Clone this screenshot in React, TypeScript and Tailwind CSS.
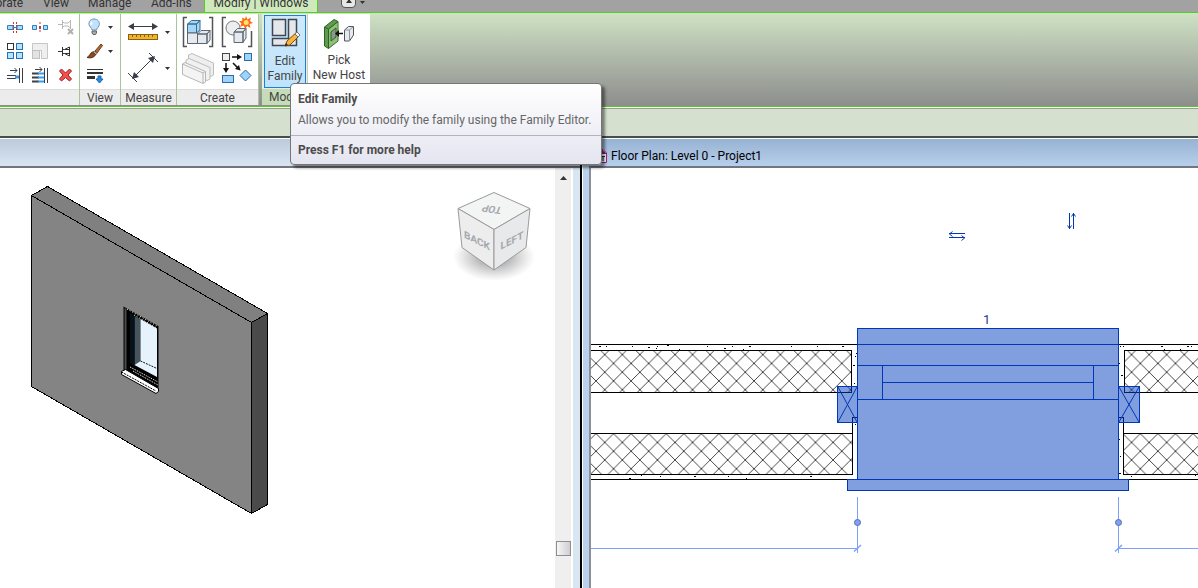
import type { ReactNode } from "react";

const INK = "#3a3f4a";
const BLUE = "#0037b8";
const DIM = "#7da0ff";

function Caret() {
  return (
    <svg width="5" height="3" viewBox="0 0 5 3">
      <path d="M0 0H5L2.5 3Z" fill="#333" />
    </svg>
  );
}

function Icon({ size = 18, children }: { size?: number; children: ReactNode }) {
  return (
    <svg width={size} height={size} viewBox={`0 0 ${size} ${size}`} fill="none">
      {children}
    </svg>
  );
}

const editTools: { name: string; icon: ReactNode }[] = [
  {
    name: "Split Element",
    icon: (
      <Icon>
        <path d="M1.500 7.500H7V11.500H1.500ZM11 7.500H16.500V11.500H11Z" fill="#a8dcf8" stroke="#2f7fb8" />
        <path d="M7 9.500H11" stroke="#2f7fb8" />
        <path d="M7.500 4V15M10.500 4V15" stroke="#c33" strokeDasharray="2 1" />
      </Icon>
    ),
  },
  {
    name: "Split with Gap",
    icon: (
      <Icon>
        <path d="M1.500 7.500H5.500V11.500H1.500ZM12.500 7.500H16.500V11.500H12.500Z" fill="#a8dcf8" stroke="#2f7fb8" />
        <path d="M9 4V7M9 12V15" stroke="#c33" strokeDasharray="2 1" />
        <rect x="8" y="8" width="2" height="3" fill="#c33" />
      </Icon>
    ),
  },
  {
    name: "Unpin",
    icon: (
      <Icon>
        <path d="M1 6.500H5M5.500 2V11M5.500 4L7.500 5H11L13.500 3M5.500 9L7.500 8H11L13.500 10M13.500 2V11" stroke="#b8b8b8" />
        <path d="M11 11L16 16M16 11L11 16" stroke="#b0b0b0" strokeWidth="2" />
      </Icon>
    ),
  },
  {
    name: "Array",
    icon: (
      <Icon>
        <rect x="1.500" y="1.500" width="6" height="6" fill="#fff" stroke="#333" />
        <rect x="10.500" y="1.500" width="6" height="6" fill="#b6e2fb" stroke="#2272b4" />
        <rect x="1.500" y="10.500" width="6" height="6" fill="#b6e2fb" stroke="#2272b4" />
        <rect x="10.500" y="10.500" width="6" height="6" fill="#b6e2fb" stroke="#2272b4" />
      </Icon>
    ),
  },
  {
    name: "Scale",
    icon: (
      <Icon>
        <path d="M1.500 1.500H16.500V16.500H10.500V8.500H1.500Z" fill="#efefef" stroke="#c6c6c6" />
        <rect x="1.500" y="8.500" width="7" height="8" fill="#e2e2e2" stroke="#c0c0c0" />
      </Icon>
    ),
  },
  {
    name: "Pin",
    icon: (
      <Icon>
        <path
          d="M1 9.500H5M5.500 5V14M5.500 7.500H7.500L12.500 5V14L7.500 11.500H5.500M7.500 7.500H12.500M7.500 11.500H12.500"
          stroke="#333"
        />
      </Icon>
    ),
  },
  {
    name: "Trim Single",
    icon: (
      <Icon>
        <path d="M1 9.500H10M1 12.500H10" stroke={INK} />
        <path d="M9 11H14" stroke="#3c9be8" strokeWidth="3" />
        <path d="M13.500 2V17M16.500 2V17" stroke={INK} />
        <path d="M4 4.500H11M8.500 2L11 4.500L8.500 7" stroke={INK} />
      </Icon>
    ),
  },
  {
    name: "Trim Multiple",
    icon: (
      <Icon>
        <path d="M1 7.500H8M1 11.500H8M1 15.500H8" stroke={INK} strokeWidth="2" />
        <path d="M7 7.500H13M7 11.500H13M7 15.500H13" stroke="#3c9be8" strokeWidth="2" />
        <path d="M13.500 2V17M16.500 2V17" stroke={INK} />
        <path d="M4 3.500H11M8.500 1L11 3.500L8.500 6" stroke={INK} />
      </Icon>
    ),
  },
  {
    name: "Delete",
    icon: (
      <Icon>
        <path
          d="M2.500 5L4.500 3L8.500 7L12.500 3L14.500 5L11 9L14.500 13L12.500 15L8.500 11.500L4.500 15L2.500 13L6 9Z"
          fill="#f0524f"
          stroke="#a81d1d"
        />
      </Icon>
    ),
  },
];

const viewTools: { name: string; menu: boolean; icon: ReactNode }[] = [
  {
    name: "Hide in View",
    menu: true,
    icon: (
      <Icon>
        <path
          d="M8 1C4.500 1 2.500 3.500 3 6.500C3.500 9 5.500 9.500 6 12H10.500C11 9.500 13 9 13.300 6.500C13.700 3.500 11.500 1 8 1Z"
          fill="#c3e2fa"
          stroke="#5f93c2"
        />
        <path d="M6 4C5 5 5 6 5.500 7" stroke="#fff" strokeWidth="2" />
        <path d="M6 13H10.500V15L9.500 16.500H7L6 15Z" fill="#aaa" stroke="#666" />
      </Icon>
    ),
  },
  {
    name: "Override Graphics",
    menu: true,
    icon: (
      <Icon>
        <path d="M9 9L15 2L16.500 3.500L11 11Z" fill="#b86a35" stroke="#6b3a1c" />
        <path d="M8 9L11 11.500L9.500 13L6.500 10.500Z" fill="#bbb" stroke="#777" />
        <path d="M6.500 10C4 11 4 14 1 15.500C5 16.500 8.500 15.500 9.500 12.500Z" fill="#8a4b22" stroke="#5b2f12" />
      </Icon>
    ),
  },
  {
    name: "Linework",
    menu: false,
    icon: (
      <Icon>
        <path d="M1 3.500H17" stroke="#333" />
        <path d="M1 7H17" stroke="#333" strokeWidth="2" />
        <path d="M1 11.500H9" stroke="#333" strokeWidth="3" />
        <path d="M12 10H15V13H17L13.500 17L10 13H12Z" fill="#2b8be0" stroke="#1666b0" />
      </Icon>
    ),
  },
];

const measureTools: { name: string; icon: ReactNode }[] = [
  {
    name: "Measure Between References",
    icon: (
      <Icon size={30}>
        <path d="M3 9.500H27" stroke={INK} />
        <path d="M0 9.500L6 6V13ZM30 9.500L24 6V13Z" fill={INK} />
        <rect x="0.500" y="17.500" width="29" height="5" fill="#eeb52e" stroke="#8e5f10" />
        <path d="M4.500 18V20M8.500 18V20M12.500 18V20M16.500 18V20M20.500 18V20M24.500 18V20" stroke="#8e5f10" />
      </Icon>
    ),
  },
  {
    name: "Aligned Dimension",
    icon: (
      <Icon size={30}>
        <path d="M6 24L25 5" stroke={INK} />
        <path d="M4 26L6 19L11 24ZM27 3L25 10L20 5Z" fill={INK} />
        <path d="M0 20L9 29M21 0L30 9" stroke={INK} />
      </Icon>
    ),
  },
];

const createTools: { name: string; icon: ReactNode }[] = [
  {
    name: "Create Assembly",
    icon: (
      <Icon size={32}>
        <path d="M5 1.500H1.500V30.500H5M27 1.500H30.500V30.500H27" stroke="#555" strokeWidth="1.500" />
        <path d="M5.500 8L9.500 4.500H18L14.500 8ZM5.500 8H14.500V17H5.500ZM14.500 8L18 4.500V14L14.500 17Z" fill="#a6d5f5" stroke="#346c98" />
        <path d="M5.500 17H15.500V27.500H5.500ZM15.500 18L19 14.500H28L25 18ZM15.500 18H25V27.500H15.500ZM25 18L28 14.500V24L25 27.500Z" fill="#e6e9ee" stroke="#5c6672" />
      </Icon>
    ),
  },
  {
    name: "Create Group",
    icon: (
      <Icon size={32}>
        <path d="M5 1.500H1.500V30.500H5M27 30.500H30.500V15" stroke="#555" strokeWidth="1.500" />
        <circle cx="12" cy="12" r="7" fill="#eceef0" stroke="#777" />
        <path d="M13 16L16.500 12.500H25L22 16ZM13 16H22V26.500H13ZM22 16L25 12.500V22L22 26.500Z" fill="#e6e9ee" stroke="#5c6672" />
        <path
          d="M25 0L26.500 3.500L30 1.500L29 5L32 7L28.500 8L29.500 12L26 10L24.500 13L22.500 9.500L19 11L20.500 7.500L18 5.500L21.500 4.500L21 1.500L24 3Z"
          fill="#ff6a13"
        />
        <circle cx="25.200" cy="6.500" r="2.500" fill="#ffe46a" />
      </Icon>
    ),
  },
  {
    name: "Create Parts",
    icon: (
      <Icon size={32}>
        <path d="M6.500 3L10 1.500L31.500 11V23L29 24.500L6.500 14Z" fill="#eee" stroke="#bdbdbd" />
        <path d="M4 8L7 6.500L28 15.500V27L25 28.500L4 19Z" fill="#f1f1f1" stroke="#bdbdbd" />
        <path d="M0.500 12L3 10.500L23.500 19.500V30L21 31.500L0.500 22.500Z" fill="#f4f4f4" stroke="#b6b6b6" />
        <path d="M0.500 12L21 21V31.500M21 21L23.500 19.500" stroke="#b6b6b6" />
      </Icon>
    ),
  },
  {
    name: "Create Similar",
    icon: (
      <Icon size={32}>
        <rect x="1.500" y="1.500" width="7" height="7" fill="#eee" stroke="#444" />
        <rect x="23.500" y="1.500" width="7" height="7" fill="#9ed3fa" stroke="#2a6ba8" />
        <rect x="1.500" y="23.500" width="11" height="7" fill="#9ed3fa" stroke="#2a6ba8" />
        <path d="M24.500 18L30 23.500L24.500 29L19 23.500Z" fill="#9ed3fa" stroke="#2a6ba8" />
        <path d="M11 5H18M5 11V17M12 11L17 16" stroke="#111" strokeWidth="1.500" />
        <path d="M21 5L16 2V8ZM5 21L2 16H8ZM19.500 18.500L14 17L18 13Z" fill="#111" />
      </Icon>
    ),
  },
];

function Panel({ title, className, children }: { title?: string; className: string; children: ReactNode }) {
  return (
    <section className={`flex flex-col border-r border-[#a9c39b] bg-white ${className}`}>
      <div className="h-[75px]">{children}</div>
      <h2 className="h-4 border-t border-[#dcdcdc] bg-[#ececec] text-center text-[12px] leading-4 text-[#444]">
        {title}
      </h2>
    </section>
  );
}

function Tabs() {
  return (
    <nav className="flex h-3 items-end overflow-hidden bg-[#a2a2a2] text-[12px] leading-[18px] whitespace-nowrap text-[#333]">
      <a href="#collaborate" className="flex w-[23px] justify-end">Collaborate</a>
      <a href="#view" className="ml-5 w-[25px]">View</a>
      <a href="#manage" className="ml-5 w-[43px]">Manage</a>
      <a href="#addins" className="ml-5 w-[42px]">Add-Ins</a>
      <a
        href="#modify"
        className="ml-[11px] w-[114px] border-x border-[#55cc22] bg-[#cfe9bd] text-center"
      >
        Modify | Windows
      </a>
      <button
        aria-label="Minimize ribbon"
        className="mb-1 ml-[23px] flex h-4 w-[15px] items-end justify-center rounded border border-[#555] bg-[#e8e8e8] pb-1"
      >
        <svg width="6" height="4" viewBox="0 0 6 4">
          <path d="M0 4L3 0L6 4Z" fill="#333" />
        </svg>
      </button>
      <button aria-label="Ribbon options" className="mb-2 ml-1">
        <Caret />
      </button>
    </nav>
  );
}

function Ribbon() {
  return (
    <div className="flex h-[95px] border-y border-[#55cc22] bg-linear-to-b from-[#cfe2c4] to-[#8d8e8c] py-px text-[12px] text-[#444]">
      <Panel className="w-20">
        <div className="grid grid-cols-3 pt-px pl-0.5">
          {editTools.map((t) => (
            <button key={t.name} aria-label={t.name} className="grid h-6 place-items-center">
              {t.icon}
            </button>
          ))}
        </div>
      </Panel>
      <Panel title="View" className="w-[41px]">
        <div className="pt-px pl-1.5">
          {viewTools.map((t) => (
            <button key={t.name} aria-label={t.name} className="flex h-6 items-center gap-1">
              {t.icon}
              {t.menu && <Caret />}
            </button>
          ))}
        </div>
      </Panel>
      <Panel title="Measure" className="w-14">
        <div className="pl-[7px]">
          {measureTools.map((t) => (
            <button key={t.name} aria-label={t.name} className="flex h-9 items-center gap-[7px]">
              {t.icon}
              <Caret />
            </button>
          ))}
        </div>
      </Panel>
      <Panel title="Create" className="w-[82px]">
        <div className="grid grid-cols-2 place-items-center gap-y-1 px-0.5 pt-0.5">
          {createTools.map((t) => (
            <button key={t.name} aria-label={t.name} className="h-8">
              {t.icon}
            </button>
          ))}
        </div>
      </Panel>
      <section className="ml-[3px] flex w-[108px] flex-col">
        <div className="flex h-[75px] bg-white">
          <div className="w-[46px] border-r border-[#ccc] bg-[#e3f0dc] pt-px pl-0.5">
            <button className="flex h-[73px] w-[42px] flex-col items-center border border-[#1d7fd8] bg-linear-to-b from-[#cfe9fb] to-[#bfe3fb] text-[12px] leading-[15px]">
              <svg width="32" height="32" viewBox="0 0 32 32" fill="none" className="mt-0.5 mb-1 shrink-0">
                <rect x="3.500" y="1.500" width="13" height="16" fill="#e4e8ec" stroke="#3f4650" strokeWidth="1.500" />
                <path d="M19.500 1.500H27.500V27.500H3.500V20.500H19.500Z" fill="#e4e8ec" stroke="#3f4650" strokeWidth="1.500" />
                <path d="M16 28L18 23L28 14L31 17L21 27Z" fill="#f7b53c" stroke="#7a4b12" />
                <path d="M28 14L31 17L29 19L26 16Z" fill="#f3f3f3" stroke="#777" />
                <path d="M16 28L17 25L19 27Z" fill="#222" />
              </svg>
              Edit
              <br />
              Family
            </button>
          </div>
          <button className="flex flex-1 flex-col items-center pt-px text-[12px] leading-[15px]">
            <svg width="34" height="32" viewBox="0 0 34 32" fill="none" className="mt-0.5 mb-1 shrink-0">
              <path d="M2.500 10L12 2.500L16 4.500V24L6.500 31.500L2.500 29Z" fill="#5f9b4c" stroke="#2b6323" />
              <path d="M7 12.500L15.500 5.500V24L7 30.500Z" fill="#8fbf78" />
              <path d="M2.500 10L6.500 12V31.500M6.500 12L16 4.500" stroke="#2b6323" />
              <path d="M9 15L14 11V20L9 24Z" fill="#8b9a90" stroke="#2b6323" />
              <path d="M15 16.500H21" stroke="#111" strokeWidth="1.500" />
              <path d="M13 16.500L17 13V20Z" fill="#111" />
              <path d="M22.500 13L26.500 9.500H31.500V18L27.500 24H22.500Z" fill="#e6e9ee" stroke="#4d5560" />
              <path d="M22.500 13H27.500V24M27.500 13L31.500 9.500" stroke="#8b929b" />
            </svg>
            Pick
            <br />
            New Host
          </button>
        </div>
        <h2 className="h-4 bg-[#c6dcb9] pl-[7px] leading-4">Modify</h2>
      </section>
    </div>
  );
}

function Tooltip() {
  return (
    <div
      role="tooltip"
      className="absolute top-[83px] left-[290px] z-10 h-[82px] w-[312px] rounded-sm border border-[#767676] bg-linear-to-b from-white to-[#e4e5f0] text-[12px] leading-4 whitespace-nowrap text-[#4c4c4c] shadow-[3px_3px_3px_rgba(0,0,0,0.45)]"
    >
      <div className="h-[52px] border-b border-[#b4b4bc] px-[7px] pt-[7px]">
        <p className="font-bold">Edit Family</p>
        <p className="pt-[5px] text-[#666]">Allows you to modify the family using the Family Editor.</p>
      </div>
      <p className="px-[7px] pt-[6px] font-bold">Press F1 for more help</p>
    </div>
  );
}

function WallView() {
  return (
    <svg width="555" height="420" viewBox="0 168 555 420" className="shrink-0">
      <defs>
        <radialGradient id="cubeShadow">
          <stop offset="0.3" stopColor="#777" stopOpacity="0.6" />
          <stop offset="1" stopColor="#999" stopOpacity="0" />
        </radialGradient>
      </defs>

      <g stroke="#000" shapeRendering="crispEdges">
        <path d="M31.500 195.500L47.500 186.500L267.500 313.500L251.500 322.500Z" fill="#808080" />
        <path d="M31.500 195.500L251.500 322.500V513.500L31.500 386.500Z" fill="#848484" />
        <path d="M251.500 322.500L267.500 313.500V504.500L251.500 513.500Z" fill="#4a4a4a" />
      </g>

      <path d="M123.500 306.500L158.500 326V390L123.500 370Z" fill="#000" />
      <path d="M124.500 308V369L126.500 370V309Z" fill="#4a4a4a" />
      <path d="M134.500 316L140.500 319.500V361L134.500 365Z" fill="#47545c" />
      <path d="M130 313L134.500 316V366L130 363Z" fill="#07131b" />
      <path d="M140.500 319L157 328.500V377L134.500 365L140.500 361Z" fill="#e6f3fc" />
      <path d="M140.500 361L157 368.500" stroke="#111" strokeDasharray="2 1" />
      <path d="M127 309L158 326.500M134 315L157 328" stroke="#fff" strokeDasharray="1 2" />
      <path d="M130 367L158 382M133 371L158 385" stroke="#fff" strokeDasharray="1 1" />
      <path d="M121.500 371.500L125.500 369.500L158.500 388.500V391.500L156 393.500L121.500 374.500Z" fill="#fff" stroke="#000" />
      <path d="M121.500 372L156 391" stroke="#000" strokeDasharray="2 1" />

      <ellipse cx="494" cy="257" rx="41" ry="24" fill="url(#cubeShadow)" />
      <g stroke="#9a9a9a">
        <path d="M458 208.500L494 192.500L530 208.500L494 229.500Z" fill="#f3f4f4" />
        <path d="M458 208.500L494 229.500V270L462 247.500Z" fill="#ededee" />
        <path d="M530 208.500L494 229.500V270L526 247.500Z" fill="#e8e9ea" />
      </g>
      <g
        fill="#a3a8ac"
        fontSize="10"
        fontWeight="bold"
        textAnchor="middle"
        className="font-['Liberation_Sans_Narrow','Roboto',sans-serif]"
      >
        <text transform="translate(493 206) rotate(188) skewX(-12)">TOP</text>
        <text transform="translate(477 244) skewY(27)">BACK</text>
        <text transform="translate(512 244) skewY(-27)">LEFT</text>
      </g>
    </svg>
  );
}

const specks = [
  [599, 346], [606, 346], [632, 346], [648, 347], [657, 346], [656, 348], [667, 345], [679, 349],
  [707, 346], [724, 348], [732, 346], [743, 349], [749, 346], [791, 346], [817, 346], [842, 346],
  [856, 353], [855, 356], [853, 365], [854, 383], [855, 424], [629, 478], [641, 475], [660, 476],
  [694, 476], [728, 476], [746, 478], [810, 476], [1120, 346], [1123, 346], [1161, 346], [1164, 349],
  [1180, 349], [1187, 346], [1191, 346], [1119, 363], [1121, 375], [1119, 439], [1120, 456],
  [1119, 473], [1131, 476], [1195, 475],
];

function PlanView() {
  return (
    <svg width="607" height="420" viewBox="591 168 607 420" className="shrink-0" fill="none">
      <defs>
        <pattern id="insulation" x="587.2" y="354.6" width="17.56" height="17.56" patternUnits="userSpaceOnUse">
          <path d="M0 0L17.560 17.560M17.560 0L0 17.560" stroke="#333" strokeWidth="0.900" />
        </pattern>
      </defs>

      <g stroke="#000" shapeRendering="crispEdges">
        <path d="M591 344.500H857M1119 344.500H1198M591 479.500H857M1119 479.500H1198" />
        <path d="M580 350.500H851.500V392.500H580ZM580 433.500H852.500V474.500H580Z" fill="url(#insulation)" />
        <path d="M1210 350.500H1124.500V392.500H1210ZM1210 433.500H1123.500V474.500H1210Z" fill="url(#insulation)" />
        <path d="M852.500 434V417.500H857M1123.500 434V417.500H1119" />
      </g>
      {specks.map(([x, y], i) => (
        <rect key={i} x={x} y={y} width={i % 3 === 0 ? 2 : 1} height="1" fill="#000" />
      ))}

      <g stroke={BLUE} fill="#0340c0" fillOpacity="0.5" shapeRendering="crispEdges">
        <rect x="857.5" y="328.5" width="261" height="151" />
        <rect x="847.5" y="479.5" width="281" height="11" />
        <rect x="837.5" y="386.5" width="20" height="36" />
        <rect x="1118.5" y="386.5" width="21" height="36" />
        <path d="M857 344.500H1119M857 365.500H1119M857 399.500H1119M882.500 365V399M1093.500 365V399M882 382.500H1094" />
      </g>
      <path d="M838 387L857 422M857 387L838 422M1119 387L1139 422M1139 387L1119 422" stroke={BLUE} />

      <text x="983" y="324" fontSize="13" fill="#1a3c94">1</text>

      <g stroke={BLUE}>
        <path d="M949 233.500H965M949.500 234L952.500 231.500M949.500 234L952.500 236.500" />
        <path d="M949 237.500H965M964.500 238L961.500 235.500M964.500 238L961.500 240.500" />
        <path d="M1069.500 213V229M1069.500 228.500L1067.500 225.500M1069.500 228.500L1071.500 225.500" />
        <path d="M1073.500 213V229M1073.500 213.500L1071.500 216.500M1073.500 213.500L1075.500 216.500" />
      </g>

      <g stroke={DIM}>
        <path d="M857.500 497V553M1118.500 497V553M591 548.500H857M1119 548.500H1198" />
        <path d="M854 551.500L861 545M1115 551.500L1122 545" strokeWidth="1.500" />
      </g>
      <g fill={DIM} stroke="#5a6f96">
        <circle cx="857.5" cy="522.5" r="3" />
        <circle cx="1118.5" cy="522.5" r="3" />
      </g>
    </svg>
  );
}

export default function App() {
  return (
    <div className="relative flex min-h-screen flex-col overflow-hidden bg-white font-['Roboto','Open_Sans',sans-serif]">
      <Tabs />
      <Ribbon />
      <div className="h-[31px] border-t border-b-2 border-t-white border-b-[#4a4d50] bg-[#d6e0cf] shadow-[inset_0_1px_0_#9a9f96]" />
      <Tooltip />

      <main className="flex flex-1 border-t border-white">
        <section className="flex w-[580px] shrink-0 flex-col">
          <div className="h-[29px] border-b-2 border-[#71757e] bg-linear-to-b from-[#bccadb] to-[#d9e5f2]" />
          <div className="flex flex-1">
            <div className="flex-1 overflow-hidden">
              <WallView />
            </div>
            <div className="flex w-4 flex-col items-center justify-between bg-[#efefef] pt-2 pb-8">
              <button aria-label="Scroll up">
                <svg width="7" height="4" viewBox="0 0 7 4" className="block">
                  <path d="M0 4L3.500 0L7 4Z" fill="#333" />
                </svg>
              </button>
              <button
                aria-label="Scroll position"
                className="size-[15px] border border-[#8e8e8e] bg-linear-to-r from-[#f6f6f6] to-[#cfcfd2]"
              />
            </div>
            <div className="w-[9px] border-l-2 border-white bg-[#d8e6f2]" />
          </div>
        </section>

        <section className="flex flex-1 border-l-2 border-black">
          <div className="w-[7px] border-l border-white bg-[#b9d1ec]" />
          <div className="flex flex-1 flex-col">
            <header className="flex h-[29px] items-center gap-1 border-b-2 border-[#71757e] bg-linear-to-b from-[#98b2d2] to-[#b6cfec] pt-1.5 pl-2 text-[12px] text-black">
              <svg width="10" height="14" viewBox="0 0 10 14">
                <path d="M0 0.500H6L9.500 4V13.500H0Z" fill="#fff" stroke="#a0207c" />
                <path d="M4 0L10 5H4Z" fill="#8a1c6c" />
                <path d="M4 7.500H8M6 7.500V12" stroke="#222" />
              </svg>
              <h1 className="leading-4">Floor Plan: Level 0 - Project1</h1>
            </header>
            <div className="flex-1 overflow-hidden border-l-2 border-[#8a8f98]">
              <PlanView />
            </div>
          </div>
        </section>
      </main>
    </div>
  );
}
